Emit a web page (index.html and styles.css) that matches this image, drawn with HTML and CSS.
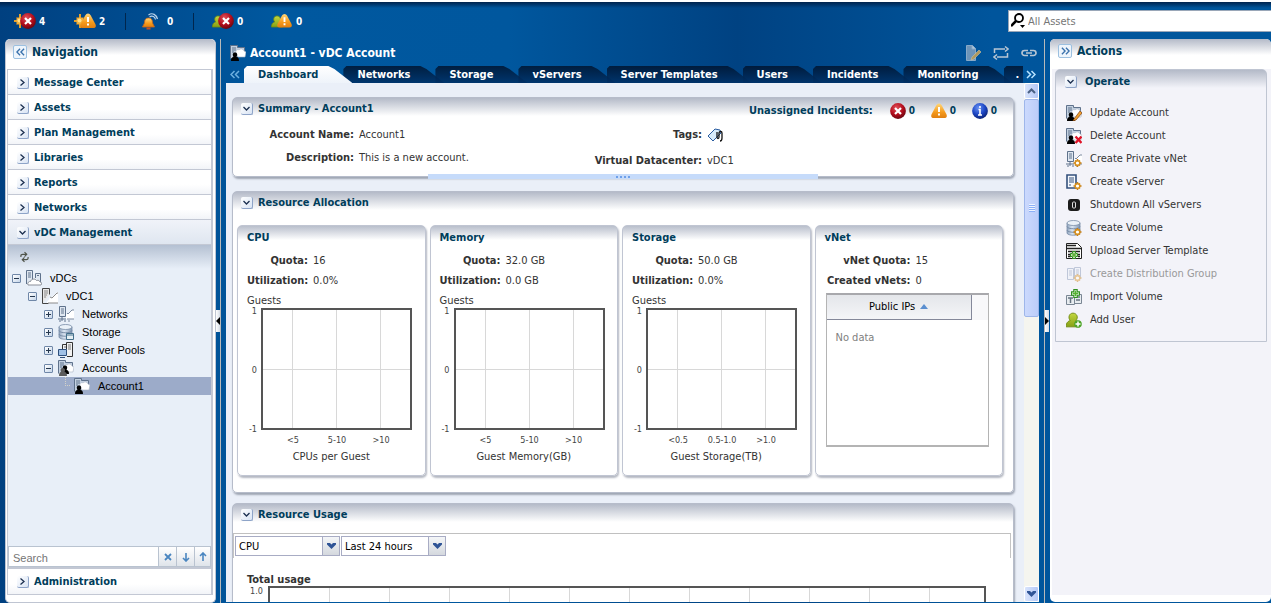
FILE: index.html
```html
<!DOCTYPE html>
<html lang="en">
<head>
<meta charset="utf-8">
<title>Account1 - vDC Account</title>
<link rel="stylesheet" href="styles.css">
</head>
<body>
<svg class="defs" aria-hidden="true">
  <defs>
    <radialGradient id="g-red" cx="40%" cy="30%" r="70%"><stop offset="0" stop-color="#e0505a"/><stop offset=".6" stop-color="#b40d1c"/><stop offset="1" stop-color="#6d0610"/></radialGradient>
    <radialGradient id="g-blue" cx="40%" cy="30%" r="70%"><stop offset="0" stop-color="#6a92f4"/><stop offset=".6" stop-color="#1c46c4"/><stop offset="1" stop-color="#0c2479"/></radialGradient>
    <linearGradient id="g-amber" x2="0" y2="1"><stop offset="0" stop-color="#ffd77a"/><stop offset=".6" stop-color="#f59a1c"/><stop offset="1" stop-color="#e07f10"/></linearGradient>
    <linearGradient id="g-db" x2="1"><stop offset="0" stop-color="#8fa3bd"/><stop offset=".4" stop-color="#dbe6f2"/><stop offset="1" stop-color="#7f96b3"/></linearGradient>
    <linearGradient id="g-green" x2="0" y2="1"><stop offset="0" stop-color="#c3d740"/><stop offset="1" stop-color="#86a014"/></linearGradient>
    <symbol id="i-critical" viewBox="0 0 16 16"><circle cx="8" cy="8" r="7.900" fill="url(#g-red)"/><path d="M5 5l6 6M11 5l-6 6" stroke="#fff" stroke-width="2.200"/></symbol>
    <symbol id="i-warning" viewBox="0 0 16 16"><path d="M8 .5c1.200 0 2 .8 2.800 2l4.500 8.500c1.200 2.500.2 4-2 4H2.700c-2.200 0-3.200-1.500-2-4l4.500-8.500C6 1.300 6.800.5 8 .5z" fill="url(#g-amber)"/><path d="M8 4v5M8 10.500v2" stroke="#fff" stroke-width="2"/></symbol>
    <symbol id="i-info" viewBox="0 0 16 16"><circle cx="8" cy="8" r="7.900" fill="url(#g-blue)"/><path d="M8 3v2M6.500 6.500H8V12M6 12h4" stroke="#fff" stroke-width="1.600" fill="none"/></symbol>
    <symbol id="i-sun" viewBox="0 0 12 14"><path d="M0 7h12M6 0v14" stroke="#e8a028" stroke-width="2"/><path d="M2.500 3.500l7 7M9.500 3.500l-7 7" stroke="#c8801c" stroke-width="1.500"/><rect x="2.500" y="3.500" width="7" height="7" rx="2" fill="#f0b03c"/><circle cx="5.500" cy="6.500" r="2" fill="#ffdf8c"/></symbol>
    <symbol id="i-head" viewBox="0 0 12 14"><path d="M0 13c0-4 2-5 3.500-5.500C1.500 5 2.500 1 6 1s5 4 2.500 6.500C10 8 12 9 12 13z" fill="url(#g-green)" stroke="#6f8a10" stroke-width=".8"/></symbol>
    <symbol id="i-bell" viewBox="0 0 16 17"><path d="M6 2c4-3 8 0 9 4M7 4c3-2 5.500 0 6 2.500" stroke="#b9d3ec" fill="none" stroke-width="1.200"/><path d="M6 5c3 0 4 2 4 5l2 4H0l2-4c0-3 1-5 4-5z" fill="url(#g-amber)" stroke="#c8641c" stroke-width=".8"/><path d="M4 14.500h4v2H4z" fill="#c8501c"/></symbol>
    <symbol id="i-base" viewBox="0 0 16 16"><path d="M.5 13.500V.5h7v2h7v9H8" fill="#c3d0e0" stroke="#5f728c"/><path d="M2 3h4M2 5h4M2 7h2" stroke="#5f728c"/><path d="M6 8c-1-3 2-4 3-3 2-2 4-1 5 1l2 1-1 5H8z" fill="#fff" stroke="#a9b4c4" stroke-width=".6"/></symbol>
    <symbol id="i-person" viewBox="0 0 16 16"><path d="M2 16c0-3 1-4 2.500-4C3 9 4 7.500 6 7.500S9 9 7.500 12C9 12 10 13 10 16z" fill="#000"/></symbol>
    <symbol id="i-account" viewBox="0 0 16 16"><use href="#i-base"/><use href="#i-person" x="-1"/></symbol>
    <symbol id="i-vdcs" viewBox="0 0 16 16"><path d="M.5 14V.5h6v13M9.500 8V3.500h5V12" fill="#dfe7f1" stroke="#5f728c"/><path d="M2 3h3M2 5h3M2 7h3M11 5.500h2" stroke="#5f728c"/><path d="M2 15c-1-2 1-4 2.500-3.500C5 9 9 8 10.500 10.500c2-.5 3 0 3.500 1.500 2 0 2 2 1 3z" fill="#fff" stroke="#8a8f99"/></symbol>
    <symbol id="i-vdc" viewBox="0 0 16 16"><path d="M.5 15.500V.5h7v6" fill="#e8e8e8" stroke="#444"/><path d="M.5 15.500h6" stroke="#444"/><path d="M2 3h4M2 5h4M2 7h3M2 9h2" stroke="#888"/><path d="M5 15c0-2 1-3 2-3 0-2 1-3 3-3l5-5h1v11z" fill="#fff"/><path d="M8 9l2 1 5-5h1M6 15h10" stroke="#8a8a8a" fill="none"/></symbol>
    <symbol id="i-net" viewBox="0 0 16 16"><path d="M1.500 10.500V.5h6v10z" fill="#dfe7f1" stroke="#5f728c"/><path d="M3 3h3M3 5h3M3 7h3M0 13h8M4 11v4M1 15h2M6 15h2" stroke="#5f728c"/><path d="M8 10c0-3 2-3 3-3l3-3h2v9H8z" fill="#fff"/><path d="M9 7l1 1 4-4h2M9 13h7M10 15h2" stroke="#7c8ba0" fill="none"/></symbol>
    <symbol id="i-db" viewBox="0 0 16 16"><path d="M1 3v10c0 3 13 3 13 0V3z" fill="url(#g-db)" stroke="#7a8ea8" stroke-width=".8"/><ellipse cx="7.500" cy="3" rx="6.500" ry="2.500" fill="#eaf1f8" stroke="#7a8ea8" stroke-width=".8"/><path d="M1 6.500c0 3 13 3 13 0M1 10c0 3 13 3 13 0" stroke="#7a8ea8" fill="none"/></symbol>
    <symbol id="i-storage" viewBox="0 0 16 16"><use href="#i-db"/><path d="M8.500 9.500h7v6h-7z" fill="#e6f0f4" stroke="#44708c"/><path d="M9 11h6" stroke="#44708c"/></symbol>
    <symbol id="i-pool" viewBox="0 0 16 16"><path d="M4.500 9V2.500h4M9 14.500h5.500V.5h-6v7" fill="#f2f2f2" stroke="#333"/><path d="M10 3h3M10 5h3M10 7h3M6 5h2" stroke="#777"/><path d="M.5 7.500h8v6h-8z" fill="#9fc0e6" stroke="#2e4f7c"/><path d="M2 15.500h5" stroke="#2e4f7c"/></symbol>
    <symbol id="i-accounts" viewBox="0 0 16 16"><use href="#i-base"/><use href="#i-person" x="1" y="-2"/><path d="M1 16c0-3 1-4 2-4C2 9 3 8 4.500 8S8 9 6.500 12C8 12 9 13 9 16z" fill="#5b5b5b"/></symbol>
    <symbol id="i-gear" viewBox="0 0 16 16"><path d="M11.500 8v8M7.500 12h8M9 9.500l5 5M14 9.500l-5 5" stroke="#c47c14" stroke-width="1.500"/><circle cx="11.500" cy="12" r="2.300" fill="#fff" stroke="#d8901c" stroke-width="1.400"/></symbol>
    <symbol id="i-update" viewBox="0 0 16 16"><use href="#i-account"/><path d="M8 14l6-8 2 2-6 7-3 1z" fill="#f0a030" stroke="#804010" stroke-width=".7"/></symbol>
    <symbol id="i-delete" viewBox="0 0 16 16"><use href="#i-account"/><path d="M9.500 8.500l6 6.500M15.500 8.500l-6 6.500" stroke="#e01428" stroke-width="2.400"/></symbol>
    <symbol id="i-vnet" viewBox="0 0 16 16"><use href="#i-net"/><use href="#i-gear"/></symbol>
    <symbol id="i-vserver" viewBox="0 0 16 16"><path d="M1 1h9v13H1z" fill="#f5f8fc" stroke="#34507c" stroke-width="1.600"/><path d="M3 4h5M3 6h5M3 8h5M3 11h2" stroke="#34507c"/><use href="#i-gear"/></symbol>
    <symbol id="i-shutdown" viewBox="0 0 16 16"><rect x="2" y="2" width="12" height="12" rx="3" fill="#1c1c1c"/><rect x="6.500" y="5" width="3" height="6" rx="1" fill="none" stroke="#ddd"/></symbol>
    <symbol id="i-volume" viewBox="0 0 16 16"><use href="#i-db"/><use href="#i-gear"/></symbol>
    <symbol id="i-plus" viewBox="0 0 8 8"><path d="M2.500.5h3v2h2v3h-2v2h-3v-2h-2v-3h2z" fill="#fff" stroke="#2f8f20"/><path d="M4 1.500v5M1.500 4h5" stroke="#55b030" stroke-width="1.500"/></symbol>
    <symbol id="i-upload" viewBox="0 0 16 16"><path d="M.5.5h11l4 4v11H.5z" fill="#fff" stroke="#222"/><path d="M1 2.500h9M1 5.500h14M2 8.500h12M2 11.500h3M2 13.500h3M12 11.500h2M12 13.500h2" stroke="#222" stroke-width="1.500"/><use href="#i-plus" x="4" y="8" width="8" height="8"/></symbol>
    <symbol id="i-group" viewBox="0 0 16 16"><path d="M1.500 2.500h6v11h-6zM8.500 1.500h6v11h-6z" fill="#eef1f7" stroke="#8294b4"/><path d="M3 5h3M3 7h3M3 9h3M10 4h3M10 6h3M10 8h3" stroke="#8294b4"/><use href="#i-gear"/></symbol>
    <symbol id="i-import" viewBox="0 0 16 16"><path d="M.5 6.500h8v9h-8zM8.500 5.500h7v9h-7z" fill="#e8ecf0" stroke="#7a8694"/><path d="M2 9h5M4.500 9v5M10 8h4M10 11h4" stroke="#667380" stroke-width="1.500"/><use href="#i-plus" x="5" y="0" width="9" height="9"/></symbol>
    <symbol id="i-adduser" viewBox="0 0 16 16"><use href="#i-head" width="14" height="16"/><circle cx="12" cy="12" r="3.800" fill="#4da428"/><path d="M12 9.500v5M9.500 12h5" stroke="#fff" stroke-width="1.500"/></symbol>
    <symbol id="i-chev" viewBox="0 0 7 7"><path d="M1.500.5l3.500 3-3.500 3" fill="none" stroke="#1c3050" stroke-width="1.300"/></symbol>
    <symbol id="i-down" viewBox="0 0 7 7"><path d="M.5 2l3 3 3-3" fill="none" stroke="#1c3050" stroke-width="1.300"/></symbol>
    <symbol id="i-dbl" viewBox="0 0 10 8"><path d="M1 .5L4.500 4 1 7.500M5.500.5L9 4 5.500 7.500" fill="none" stroke="currentColor" stroke-width="1.500"/></symbol>
    <symbol id="i-caret" viewBox="0 0 9 6"><path d="M0 0h3l1.500 1.500L6 0h3v1.500L4.500 6 0 1.500z" fill="#2f5496"/></symbol>
    <symbol id="i-up" viewBox="0 0 9 6"><path d="M1 5l3.500-3.500L8 5" fill="none" stroke="#4a6184" stroke-width="2"/></symbol>
  </defs>
</svg>

<div class="app">
  <header class="topbar">
    <ul class="alerts">
      <li class="alert"><svg class="ico-pair"><use href="#i-sun" x="0" y="1" width="12" height="14"/><use href="#i-critical" x="6" y="0" width="16" height="16"/></svg><b>4</b></li>
      <li class="alert"><svg class="ico-pair"><use href="#i-sun" x="0" y="1" width="12" height="14"/><use href="#i-warning" x="6" y="0" width="16" height="16"/></svg><b>2</b></li>
      <li class="alert alert--bell"><svg class="ico-bell"><use href="#i-bell"/></svg><b>0</b></li>
      <li class="alert alert--people"><svg class="ico-pair"><use href="#i-head" x="0" y="2" width="12" height="13"/><use href="#i-critical" x="6" y="0" width="16" height="16"/></svg><b>0</b></li>
      <li class="alert"><svg class="ico-pair"><use href="#i-head" x="0" y="2" width="12" height="13"/><use href="#i-warning" x="6" y="0" width="15" height="16"/></svg><b>0</b></li>
    </ul>
    <label class="asset-search">
      <svg class="asset-search__icon" viewBox="0 0 16 16"><circle cx="8" cy="5" r="4" fill="#fff" stroke="#000" stroke-width="1.800"/><path d="M5 8l-5 5" stroke="#000" stroke-width="2.500"/><path d="M9 12h5l-2.500 3z"/></svg>
      <input type="text" placeholder="All Assets" aria-label="Search all assets">
    </label>
  </header>

  <main class="workspace">
    <nav class="nav" aria-label="Navigation">
      <div class="pane-title"><button class="fold fold--left" aria-label="Collapse navigation"><svg><use href="#i-dbl"/></svg></button><h2>Navigation</h2></div>
      <div class="nav__body">
        <button class="section"><span class="box"><svg><use href="#i-chev"/></svg></span>Message Center</button>
        <button class="section"><span class="box"><svg><use href="#i-chev"/></svg></span>Assets</button>
        <button class="section"><span class="box"><svg><use href="#i-chev"/></svg></span>Plan Management</button>
        <button class="section"><span class="box"><svg><use href="#i-chev"/></svg></span>Libraries</button>
        <button class="section"><span class="box"><svg><use href="#i-chev"/></svg></span>Reports</button>
        <button class="section"><span class="box"><svg><use href="#i-chev"/></svg></span>Networks</button>
        <button class="section section--open"><span class="box"><svg><use href="#i-down"/></svg></span>vDC Management</button>
        <div class="tree-pane">
          <div class="tree-tools"><button class="plain" aria-label="Refresh"><svg viewBox="0 0 10 12"><path d="M1 6V4.500c0-1 .5-1.500 2-1.500h4M5 .5L7.500 3 5 5.500M9 6v1.500C9 8.500 8.500 9 7 9H3M5 6.500L2.500 9 5 11.500" fill="none" stroke="#50544a" stroke-width="1.300"/></svg></button></div>
          <ul class="tree">
            <li class="node node--1"><button class="toggle" aria-label="Collapse"></button><svg><use href="#i-vdcs"/></svg><a href="#">vDCs</a></li>
            <li class="node node--2"><button class="toggle" aria-label="Collapse"></button><svg><use href="#i-vdc"/></svg><a href="#">vDC1</a></li>
            <li class="node node--3"><button class="toggle toggle--plus" aria-label="Expand"></button><svg><use href="#i-net"/></svg><a href="#">Networks</a></li>
            <li class="node node--3"><button class="toggle toggle--plus" aria-label="Expand"></button><svg><use href="#i-storage"/></svg><a href="#">Storage</a></li>
            <li class="node node--3"><button class="toggle toggle--plus" aria-label="Expand"></button><svg><use href="#i-pool"/></svg><a href="#">Server Pools</a></li>
            <li class="node node--3"><button class="toggle" aria-label="Collapse"></button><svg><use href="#i-accounts"/></svg><a href="#">Accounts</a></li>
            <li class="node node--4 node--selected"><span class="elbow"></span><svg><use href="#i-account"/></svg><a href="#">Account1</a></li>
          </ul>
        </div>
        <div class="tree-search">
          <input type="text" placeholder="Search" aria-label="Search tree">
          <button aria-label="Clear"><svg viewBox="0 0 10 10"><path d="M2 2l6 6M8 2L2 8" stroke="#4a86c0" stroke-width="1.800"/></svg></button>
          <button aria-label="Next"><svg viewBox="0 0 10 10"><path d="M5 1v8M2 6l3 3 3-3" fill="none" stroke="#4a86c0" stroke-width="1.600"/></svg></button>
          <button aria-label="Previous"><svg viewBox="0 0 10 10"><path d="M5 9V1M2 4l3-3 3 3" fill="none" stroke="#4a86c0" stroke-width="1.600"/></svg></button>
        </div>
        <button class="section section--last"><span class="box"><svg><use href="#i-chev"/></svg></span>Administration</button>
      </div>
    </nav>

    <div class="splitter"><button aria-label="Hide navigation"><svg viewBox="0 0 4 8"><path d="M4 0v8L0 4z"/></svg></button></div>

    <section class="center">
      <div class="titlebar">
        <svg class="titlebar__icon"><use href="#i-account"/></svg>
        <h1>Account1 - vDC Account</h1>
        <button class="plain" aria-label="Edit"><svg viewBox="0 0 16 16"><path d="M1.500.5h6l3 3v12h-9z" fill="#6d94b8" stroke="#88a9c8"/><path d="M7 .500V4h3.500" fill="#b7cde0" stroke="#88a9c8"/><path d="M6 15l1-3 7-7 2 2-7 7z" fill="#b09a60" stroke="#c8c0a0" stroke-width=".6"/></svg></button>
        <button class="plain" aria-label="Refresh"><svg viewBox="0 0 16 16"><path d="M1.500 8V4H12M12 1.500L15 4l-3 2.500M14.500 8v4H4M4 9.500L1 12l3 2.500" fill="none" stroke="#b8c6d4" stroke-width="1.500"/></svg></button>
        <button class="plain" aria-label="Link"><svg viewBox="0 0 16 16"><path d="M7 5.500H3.500a2.500 2.500 0 000 5H7M9 5.500h3.500a2.500 2.500 0 010 5H9M5 8h6" fill="none" stroke="#b8c6d4" stroke-width="1.700"/></svg></button>
      </div>
      <div class="tabbar">
        <button class="tabnav tabnav--back" aria-label="Previous tabs"><svg><use href="#i-dbl"/></svg></button>
        <div class="tabs">
          <button class="tab tab--active">Dashboard</button>
          <button class="tab">Networks</button>
          <button class="tab">Storage</button>
          <button class="tab">vServers</button>
          <button class="tab">Server Templates</button>
          <button class="tab">Users</button>
          <button class="tab">Incidents</button>
          <button class="tab">Monitoring</button>
          <button class="tab tab--cut">.</button>
        </div>
        <button class="tabnav" aria-label="More tabs"><svg><use href="#i-dbl"/></svg></button>
      </div>

      <div class="viewport">
        <div class="content">
          <section class="card card--summary">
            <div class="card__head">
              <button class="box" aria-label="Collapse summary"><svg><use href="#i-down"/></svg></button>
              <h3>Summary - Account1</h3>
              <div class="incidents"><span>Unassigned Incidents:</span>
                <span class="count"><svg><use href="#i-critical"/></svg><b>0</b></span>
                <span class="count"><svg><use href="#i-warning"/></svg><b>0</b></span>
                <span class="count"><svg><use href="#i-info"/></svg><b>0</b></span>
              </div>
            </div>
            <div class="summary">
              <dl class="facts"><dt>Account Name:</dt><dd>Account1</dd><dt>Description:</dt><dd>This is a new account.</dd></dl>
              <dl class="facts facts--right"><dt>Tags:</dt><dd><svg class="tag" viewBox="0 0 16 14"><path d="M1 8l7-7 5 1 1 3-8 8z" fill="#d8ecfb" stroke="#2a5ca0"/><path d="M10 4v5c0 2 2 2 2 0V5c0-2 3-2 3 0v5c0 2-1 3-2 3" fill="none" stroke="#111" stroke-width="1.300"/></svg></dd><dt>Virtual Datacenter:</dt><dd>vDC1</dd></dl>
            </div>
            <div class="grip"><i></i><i></i><i></i><i></i></div>
          </section>

          <section class="card card--allocation">
            <div class="card__head"><button class="box" aria-label="Collapse allocation"><svg><use href="#i-down"/></svg></button><h3>Resource Allocation</h3></div>
            <div class="quad">
              <article class="tile">
                <h4>CPU</h4>
                <dl class="facts"><dt>Quota:</dt><dd>16</dd><dt>Utilization:</dt><dd>0.0%</dd></dl>
                <p class="axis-title">Guests</p>
                <div class="chart">
                  <div class="chart__y"><span>1</span><span>0</span><span>-1</span></div>
                  <div class="plot"><i></i><i></i><i></i></div>
                  <div class="chart__x"><span>&lt;5</span><span>5-10</span><span>&gt;10</span></div>
                </div>
                <p class="chart-name">CPUs per Guest</p>
              </article>
              <article class="tile">
                <h4>Memory</h4>
                <dl class="facts"><dt>Quota:</dt><dd>32.0 GB</dd><dt>Utilization:</dt><dd>0.0 GB</dd></dl>
                <p class="axis-title">Guests</p>
                <div class="chart">
                  <div class="chart__y"><span>1</span><span>0</span><span>-1</span></div>
                  <div class="plot"><i></i><i></i><i></i></div>
                  <div class="chart__x"><span>&lt;5</span><span>5-10</span><span>&gt;10</span></div>
                </div>
                <p class="chart-name">Guest Memory(GB)</p>
              </article>
              <article class="tile">
                <h4>Storage</h4>
                <dl class="facts"><dt>Quota:</dt><dd>50.0 GB</dd><dt>Utilization:</dt><dd>0.0%</dd></dl>
                <p class="axis-title">Guests</p>
                <div class="chart">
                  <div class="chart__y"><span>1</span><span>0</span><span>-1</span></div>
                  <div class="plot"><i></i><i></i><i></i></div>
                  <div class="chart__x"><span>&lt;0.5</span><span>0.5-1.0</span><span>&gt;1.0</span></div>
                </div>
                <p class="chart-name">Guest Storage(TB)</p>
              </article>
              <article class="tile tile--vnet">
                <h4>vNet</h4>
                <dl class="facts"><dt>vNet Quota:</dt><dd>15</dd><dt>Created vNets:</dt><dd>0</dd></dl>
                <div class="ips">
                  <table>
                    <thead><tr><th scope="col">Public IPs <svg viewBox="0 0 8 5"><path d="M4 0l4 5H0z" fill="#5b8fd0"/></svg></th></tr></thead>
                    <tbody><tr><td>No data</td></tr></tbody>
                  </table>
                </div>
              </article>
            </div>
          </section>

          <section class="card card--usage">
            <div class="card__head"><button class="box" aria-label="Collapse usage"><svg><use href="#i-down"/></svg></button><h3>Resource Usage</h3></div>
            <div class="usage">
              <div class="filters">
                <label class="pick"><select aria-label="Resource"><option>CPU</option><option>Memory</option></select><span><svg><use href="#i-caret"/></svg></span></label>
                <label class="pick"><select aria-label="Period"><option>Last 24 hours</option></select><span><svg><use href="#i-caret"/></svg></span></label>
              </div>
              <h4>Total usage</h4>
              <div class="timeline"><span>1.0</span><div class="timeline__plot"></div></div>
            </div>
          </section>
        </div>
        <div class="scrollbar"><button aria-label="Scroll up"><svg><use href="#i-up"/></svg></button><div class="scrollbar__thumb"><i></i></div><div class="scrollbar__track"></div><button aria-label="Scroll down"><svg><use href="#i-caret"/></svg></button></div>
      </div>
    </section>

    <div class="splitter splitter--right"><button aria-label="Hide actions"><svg viewBox="0 0 4 8"><path d="M0 0v8l4-4z"/></svg></button></div>

    <aside class="actions">
      <div class="pane-title"><button class="fold" aria-label="Collapse actions"><svg><use href="#i-dbl"/></svg></button><h2>Actions</h2></div>
      <div class="actions__body">
        <section class="operate">
          <div class="operate__head"><button class="box" aria-label="Collapse operate"><svg><use href="#i-down"/></svg></button><h3>Operate</h3></div>
          <ul>
            <li><button><svg><use href="#i-update"/></svg>Update Account</button></li>
            <li><button><svg><use href="#i-delete"/></svg>Delete Account</button></li>
            <li><button><svg><use href="#i-vnet"/></svg>Create Private vNet</button></li>
            <li><button><svg><use href="#i-vserver"/></svg>Create vServer</button></li>
            <li><button><svg><use href="#i-shutdown"/></svg>Shutdown All vServers</button></li>
            <li><button><svg><use href="#i-volume"/></svg>Create Volume</button></li>
            <li><button><svg><use href="#i-upload"/></svg>Upload Server Template</button></li>
            <li><button disabled><svg><use href="#i-group"/></svg>Create Distribution Group</button></li>
            <li><button><svg><use href="#i-import"/></svg>Import Volume</button></li>
            <li><button><svg><use href="#i-adduser"/></svg>Add User</button></li>
          </ul>
        </section>
      </div>
    </aside>
  </main>
</div>
</body>
</html>
```
FILE: styles.css
```css
* { box-sizing: border-box; }

body, h1, h2, h3, h4, p, ul, dl, dd { margin: 0; padding: 0; }

body, button, input, select {
  font-family: "DejaVu Sans Condensed", "DejaVu Sans", sans-serif;
  font-size: 11px;
}

body { color: #333; line-height: 14px; overflow: hidden; }
ul { list-style: none; }
a { color: inherit; text-decoration: none; }
button { margin: 0; padding: 0; border: 0; background: none; color: inherit; line-height: 14px; }
svg { display: block; flex: none; }
h2, h3, h4 { color: #003d5b; font-size: 11px; line-height: 14px; }
h2 { font-size: 12px; }
.defs { position: absolute; width: 0; height: 0; }

.app {
  display: flex;
  flex-direction: column;
  height: 100vh;
  border-top: 2px solid #fff;
  background: linear-gradient(90deg, #004080 0, #00589f 22%, #00579e 40%, #004282 58%, #00559c 78%, #00569c);
}

/* top bar */
.topbar { display: flex; align-items: center; justify-content: space-between; height: 37px; background: linear-gradient(#00234d, transparent 6px); }
.alerts { display: flex; align-items: center; padding: 2px 0 0 14px; color: #fff; }
.alert { display: flex; align-items: center; gap: 3px; width: 60px; height: 17px; }
.alert b { font-size: 10px; }
.ico-pair { width: 22px; height: 17px; }
.ico-bell { width: 17px; height: 17px; }
.alert--bell { gap: 8px; width: 68px; margin-left: -9px; padding-left: 16px; border-left: 1px solid #00264d; }
.alert--people { width: 78px; padding-left: 18px; border-left: 1px solid #00264d; }
.asset-search { display: flex; align-items: center; gap: 1px; width: 263px; height: 22px; margin-top: 1px; padding-left: 2px; border: 1px solid #9aa7b8; border-right: 0; background: #fff; }
.asset-search__icon { width: 16px; height: 16px; }
.asset-search input { flex: 1; min-width: 0; padding: 1px 0 0; border: 0; outline: 0; background: none; }
input::placeholder { color: #757575; opacity: 1; }

.workspace { display: flex; flex: 1; min-height: 0; }

/* shared pane pieces */
.pane-title { display: flex; flex: none; align-items: center; gap: 5px; height: 30px; padding: 0 8px 6px; background: linear-gradient(#b4bac8, #fff 16px); border-radius: 5px 5px 0 0; }
.fold { display: grid; place-items: center; width: 14px; height: 14px; border: 1px solid #9cc0e0; border-radius: 2px; background: #eef5fc; color: #3a72ac; }
.fold svg { width: 9px; height: 8px; }
.fold--left svg { transform: rotate(180deg); }
.box { display: grid; place-items: center; flex: none; width: 12px; height: 12px; border-right: 1px solid #8ea4c8; border-bottom: 1px solid #8ea4c8; border-radius: 2px; background: linear-gradient(135deg, #fff, #d9e4f4); }
.box svg { width: 7px; height: 7px; }
.plain svg { width: 16px; height: 16px; }

/* navigation */
.nav { display: flex; flex-direction: column; width: 211px; margin-left: 5px; background: #fff; border: 1px solid #bfc5d2; border-top: 0; border-radius: 5px; }
.nav .pane-title { padding: 0 7px 5px; }
.nav__body { display: flex; flex-direction: column; flex: 1; min-height: 0; margin: 0 2px 7px 1px; border: 1px solid #c3c8d4; border-width: 1px 2px 1px 1px; }
.section { display: flex; flex: none; align-items: center; gap: 5px; height: 25px; padding: 1px 0 0 9px; border-bottom: 1px solid #c3c8d4; background: linear-gradient(#fff 60%, #f2f4f8); color: #003d5b; font-weight: bold; }
.section--open { background: linear-gradient(#f0f3f9, #dfe6f0); }
.section--last { border-bottom: 0; border-top: 2px solid #c3c8d4; height: 27px; }
.tree-pane { flex: 1; min-height: 0; background: #e8eff8; }
.tree-tools { display: flex; align-items: center; height: 24px; padding-left: 12px; background: linear-gradient(#b4c0d2, #e8eff8); }
.tree-tools svg { width: 9px; height: 12px; }
.node { display: flex; align-items: center; height: 18px; color: #000; font: 11px/14px "Liberation Sans", sans-serif; }
.node svg { width: 16px; height: 16px; margin: 0 8px 0 5px; }
.node--1 { padding-left: 4px; }
.node--2 { padding-left: 20px; }
.node--3 { padding-left: 36px; }
.node--4 { padding-left: 57px; }
.node--selected { background: #9cabc9; }
.elbow { width: 5px; height: 9px; margin-bottom: 9px; border: 1px dotted #d5d2c8; border-width: 0 0 1px 1px; }
.node--4 svg { margin: 0 8px 0 4px; }
.toggle { width: 9px; height: 9px; border: 1px solid #6f87a8; border-radius: 1px; background: linear-gradient(#26384f, #26384f) center / 5px 1px no-repeat, linear-gradient(135deg, #fff, #c6d6ea); }
.toggle--plus { background: linear-gradient(#26384f, #26384f) center / 5px 1px no-repeat, linear-gradient(#26384f, #26384f) center / 1px 5px no-repeat, linear-gradient(135deg, #fff, #c6d6ea); }
.tree-search { display: flex; flex: none; height: 21px; border: 1px solid #b9c3d0; }
.tree-search input { flex: 1; min-width: 0; padding: 2px 4px 0; border: 0; outline: 0; font-family: "Liberation Sans", sans-serif; }
.tree-search button { display: grid; place-items: center; width: 18px; border-left: 1px solid #b9c3d0; background: linear-gradient(#fff, #dfe4ea); }
.tree-search button:last-child { width: 16px; }
.tree-search svg { width: 10px; height: 10px; }

/* splitters */
.splitter { display: flex; flex: none; align-items: center; width: 5px; border-right: 1px solid #b9b9b9; }
.splitter button { display: grid; place-items: center; width: 4px; height: 22px; background: linear-gradient(90deg, #fff, #d5dce6); }
.splitter svg { width: 4px; height: 8px; }
.splitter--right { width: 6px; border: 0; border-left: 1px solid #b9b9b9; }

/* center */
.center { display: flex; flex: 1; flex-direction: column; min-width: 0; padding: 0 5px 1px; }
.titlebar { display: flex; flex: none; align-items: center; gap: 12px; height: 27px; padding: 0 2px 0 4px; }
.titlebar__icon { width: 16px; height: 16px; margin-right: -8px; }
.titlebar h1 { flex: 1; color: #fff; font-size: 12px; line-height: 16px; }
.tabbar { display: flex; flex: none; height: 17px; }
.tabnav { display: grid; place-items: center; flex: none; width: 16px; color: #b8e4ff; }
.tabnav--back { width: 18px; color: #6cb0e0; }
.tabnav--back svg { transform: rotate(180deg); }
.tabnav svg { width: 10px; height: 9px; }
.tabs { display: flex; flex: 1; min-width: 0; overflow: hidden; }
.tab { position: relative; flex: none; height: 17px; margin-right: -9px; padding: 1px 34px 0 14px; color: #fff; font-weight: bold; z-index: 0; }
.tab::before { content: ""; position: absolute; inset: 0; z-index: -1; background: linear-gradient(#00142f, #003066); opacity: .85; clip-path: polygon(0 3px, 3px 0, calc(100% - 24px) 0, calc(100% - 18px) 3px, 100% 100%, 0 100%); }
.tab--active { z-index: 1; color: #003d5b; }
.tab--active::before { background: linear-gradient(#fff, #eef3fa); opacity: 1; }
.tab--cut { padding-left: 12px; }

.viewport { display: flex; flex: 1; min-height: 0; background: #eaeff8; }
.content { flex: 1; min-width: 0; overflow: hidden; padding: 14px 10px 0 6px; }
.scrollbar { display: flex; flex-direction: column; width: 15px; background: #f5f5ef; }
.scrollbar button { display: grid; place-items: center; height: 16px; border: 1px solid #fff; border-radius: 2px; background: linear-gradient(90deg, #d9e4fc, #b4c8f6); }
.scrollbar svg { width: 9px; height: 6px; }
.scrollbar__thumb { display: grid; place-items: center; flex: 216; border: 1px solid #9eb6ea; border-radius: 2px; background: linear-gradient(90deg, #cbd9fd, #bccdf9); }
.scrollbar__thumb i { width: 6px; height: 8px; background: repeating-linear-gradient(#eef4fe 0 1px, #8cb0f8 1px 2px); }
.scrollbar__track { flex: 270; }

.card { margin-bottom: 14px; border: 1px solid #b6bcca; border-radius: 5px; background: linear-gradient(#b4bac8, #fff 18px); box-shadow: 1px 2px 2px #9fa6b4; }
.card--allocation { margin-bottom: 10px; }
.card__head { display: flex; align-items: center; gap: 5px; height: 21px; padding: 1px 16px 0 8px; }
.card__head h3 { flex: 1; }
.incidents { display: flex; align-items: center; padding-top: 3px; color: #003d5b; font-weight: bold; }
.count { display: flex; align-items: center; gap: 3px; width: 41px; font-size: 10px; }
.count svg { width: 16px; height: 16px; }
.incidents > span:first-child { margin-right: 17px; }
.incidents .count:last-child { width: auto; }

.facts { display: grid; column-gap: 5px; row-gap: 6px; color: #333; }
.facts dt { font-weight: bold; text-align: right; white-space: nowrap; }
.summary { display: grid; grid-template-columns: 1fr 1fr; height: 56px; padding-top: 9px; }
.summary .facts { grid-template-columns: 121px 1fr; grid-auto-rows: 14px; row-gap: 9px; align-content: start; }
.summary .facts--right { grid-template-columns: 79px 1fr; row-gap: 12px; }
.summary .facts--right dt { justify-self: end; }
.tag { width: 16px; height: 14px; }
.card--summary { height: 80px; }
.grip { display: flex; align-items: center; justify-content: center; gap: 2px; width: 50%; height: 5px; margin: -1px auto 0; background: #c6dbfa; }
.grip i { width: 2px; height: 2px; background: #6ea0ea; }

.quad { display: grid; grid-template-columns: repeat(4, 1fr); gap: 4px; padding: 12px 10px 16px 4px; }
.tile { min-width: 0; height: 251px; padding: 5px 9px; border: 1px solid #c0c5d2; border-radius: 5px; background: linear-gradient(#b9bfcc, #fff 14px); box-shadow: 1px 2px 2px #b4b8c2; }
.tile .facts { grid-template-columns: 61px 1fr; margin-top: 9px; }
.tile--vnet .facts { grid-template-columns: 86px 1fr; }
.axis-title { margin-top: 6px; }
.chart { display: grid; grid-template-columns: 10px 151px; column-gap: 4px; row-gap: 4px; color: #444; font-size: 9px; line-height: 12px; }
.chart__y { display: flex; flex-direction: column; justify-content: space-between; margin: -3px 0 -5px; text-align: right; }
.plot { display: grid; grid-template-columns: 29px 43px 43px; column-gap: 1px; height: 122px; border: 2px solid #555; background: linear-gradient(#d8d8d8, #d8d8d8) 0 59px / 100% 1px no-repeat; }
.plot i { border-right: 1px solid #d8d8d8; margin-right: -1px; }
.chart__x { grid-column: 2; display: grid; grid-template-columns: repeat(3, 44px); padding-left: 10px; text-align: center; }
.chart-name { margin-top: 4px; text-align: center; }
.ips { height: 154px; margin: 5px 4px 0 1px; border: 1px solid #b4b4b4; border-top: 2px solid #a8a8ac; border-bottom-width: 2px; background: linear-gradient(#f8f8fa, #f8f8fa) 0 0 / 100% 25px no-repeat, #fff; }
.ips table { width: 90%; border-collapse: separate; border-spacing: 0; }
.ips th { height: 25px; padding: 0; border: 1px solid #84889a; border-width: 0 1px 1px 0; background: linear-gradient(#e4e6ea, #f4f5f8); color: #000; font-weight: normal; }
.ips th svg { display: inline-block; width: 8px; height: 5px; margin: 0 0 1px 2px; }
.ips td { padding: 11px 9px; color: #808080; }

.card--usage { margin-bottom: 0; padding-bottom: 40px; }
.usage { margin: 8px 2px 0 0; border-top: 1px solid #c0c0c0; }
.filters { display: flex; gap: 1px; padding: 2px 0 0 1px; border: 1px solid #c4c4c4; border-width: 0 1px; height: 24px; }
.pick { display: flex; width: 105px; height: 20px; border: 1px solid #a8acc4; background: #fff; }
.pick select { flex: 1; min-width: 0; padding: 0 3px; border: 0; outline: 0; appearance: none; background: none; color: #000; }
.pick span { display: grid; place-items: center; width: 17px; border-left: 1px solid #a8acc4; background: linear-gradient(#f4f6f8, #d4d8de); }
.pick svg { width: 9px; height: 6px; }
.usage h4 { margin: 15px 0 0 14px; color: #333; line-height: 13px; }
.timeline { display: flex; gap: 5px; padding-left: 17px; color: #444; font-size: 9px; line-height: 10px; }
.timeline__plot { flex: 1; height: 60px; margin-right: 25px; border: 2px solid #555; background: repeating-linear-gradient(90deg, transparent 0 59px, #d8d8d8 59px 60px); }

/* actions */
.actions { display: flex; flex-direction: column; width: 221px; margin-bottom: 1px; padding: 0 0 7px 0; background: #fff; border-radius: 5px; }
.actions__body { flex: 1; min-height: 0; margin-left: 2px; padding: 0 4px 0 3px; background: #f3f3f9; }
.operate { border: 1px solid #bfc5d2; border-radius: 5px 5px 0 0; background: linear-gradient(#b4bac8, #f3f3f9 18px); padding-bottom: 10px; }
.operate__head { display: flex; align-items: center; gap: 8px; height: 31px; padding: 0 9px 7px; }
.operate ul button { display: flex; align-items: center; gap: 8px; height: 23px; padding-left: 10px; color: #333; }
.operate svg { width: 16px; height: 16px; }
.operate .box svg { width: 7px; height: 7px; }
.operate ul button:disabled { color: #999; }
.operate ul button:disabled svg { opacity: .45; }
```
